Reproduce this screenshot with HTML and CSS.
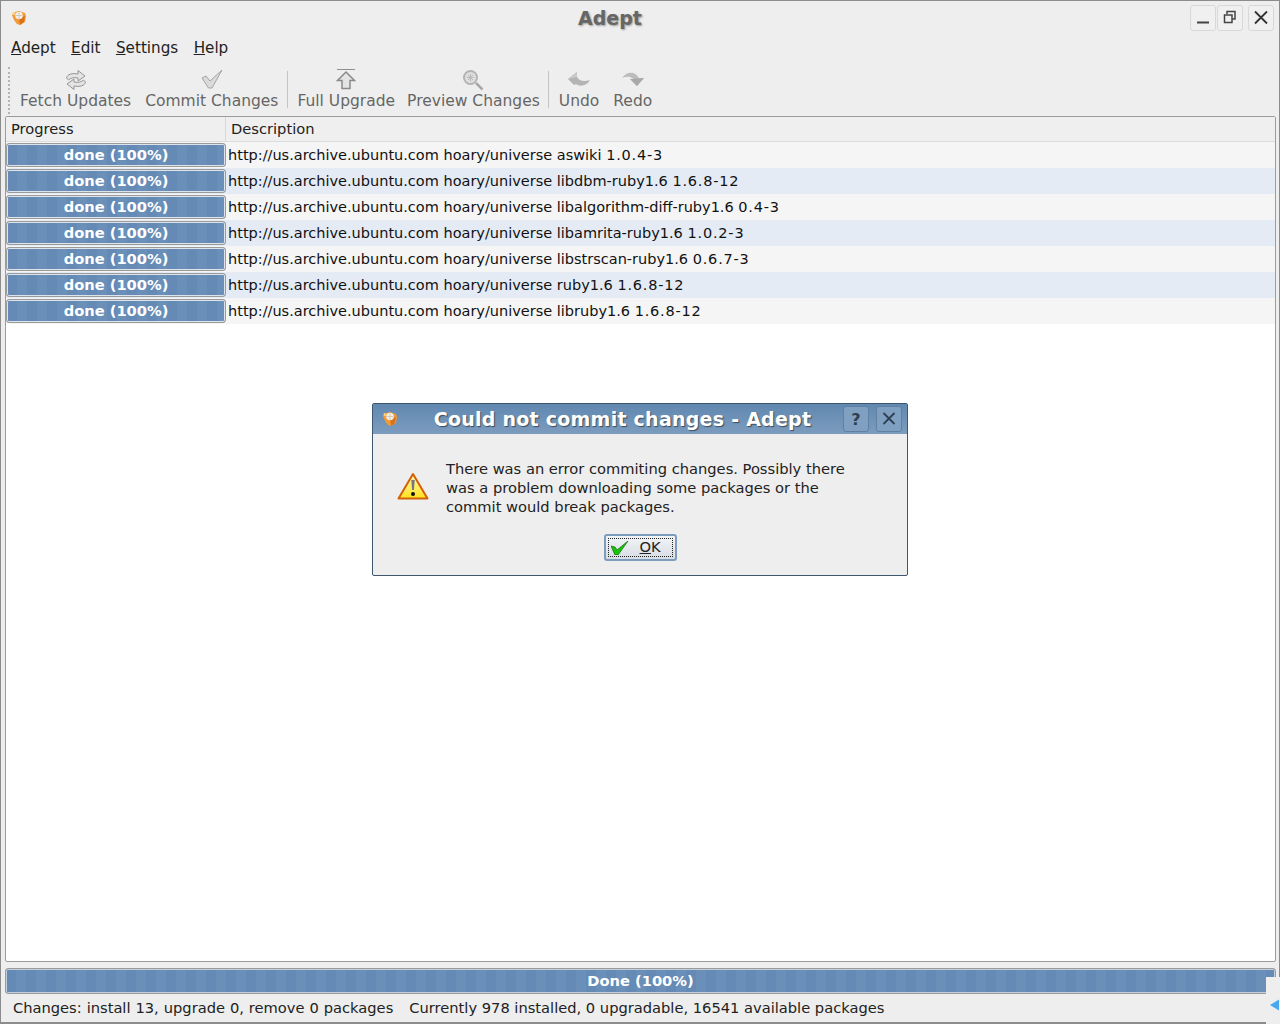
FILE: index.html
```html
<!DOCTYPE html>
<html lang="en">
<head>
<meta charset="utf-8">
<title>Adept</title>
<link rel="stylesheet" href="styles.css">
</head>
<body>
<div class="window">
  <header class="titlebar">
    <svg class="app-icon" viewBox="0 0 16 16" width="16" height="16"><path d="M1 5l3-3 4-1 6 2 1 3-1 6-5 3-3-1-3-4z" fill="#f39a33"/><path d="M8 8l6-2-1 6-4 3z" fill="#d9721a"/><circle cx="8" cy="5.500" r="3.800" fill="#f4efe8"/><path d="M8 2v7M4.500 5.500h7" stroke="#c9c0b4" stroke-width=".8"/><circle cx="3" cy="3.500" r="1.500" fill="#fbd27a"/></svg>
    <div class="title">Adept</div>
    <div class="wm-buttons">
      <button class="wm-btn"><svg viewBox="0 0 24 24" width="24" height="24"><path d="M6 16.500h12" stroke="#444" stroke-width="2" fill="none"/></svg></button>
      <button class="wm-btn"><svg viewBox="0 0 24 24" width="24" height="24"><path d="M9 8V5.500h8V13h-3M6.500 9h7.500v7.500h-7.500z" stroke="#444" stroke-width="1.500" fill="none"/></svg></button>
      <button class="wm-btn wm-close"><svg viewBox="0 0 24 24" width="24" height="24"><path d="M6 5.500l12 12M18 5.500l-12 12" stroke="#333" stroke-width="1.800" fill="none"/></svg></button>
    </div>
  </header>
  <nav class="menubar">
    <span class="menu"><u>A</u>dept</span>
    <span class="menu"><u>E</u>dit</span>
    <span class="menu"><u>S</u>ettings</span>
    <span class="menu"><u>H</u>elp</span>
  </nav>
  <div class="toolbar">
    <div class="handle"></div>
    <div class="tool tool-fetch">
      <svg viewBox="0 0 22 22" width="22" height="22"><path d="M1.500 9C2.500 5 7 4 13 5V1.500L20 7l-7 5V9C9 8 5.500 9 3.500 11z" fill="#e4e4e4" stroke="#959595"/><path d="M20.500 13c-1 4-5.500 5-11.500 4v3.500L2 15l7-5v3c4 1 7.500 0 9.500-2z" fill="#e4e4e4" stroke="#959595"/></svg>
      <span>Fetch Updates</span>
    </div>
    <div class="tool tool-commit">
      <svg viewBox="0 0 22 22" width="22" height="22"><path d="M1 9l4-2 4 5L21 1 11 19H7.500z" fill="#dadada" stroke="#a4a4a4"/></svg>
      <span>Commit Changes</span>
    </div>
    <div class="sep sep-1"></div>
    <div class="tool tool-upgrade">
      <svg viewBox="0 0 22 22" width="22" height="22"><path d="M2 .5h18" stroke="#8e8e8e" fill="none"/><path d="M11 3l8.500 8.500H15v8H7v-8H2.500z" fill="#e4e4e4" stroke="#8a8a8a" stroke-width="1.500"/></svg>
      <span>Full Upgrade</span>
    </div>
    <div class="tool tool-preview">
      <svg viewBox="0 0 22 22" width="22" height="22"><circle cx="8.500" cy="8.500" r="6.500" fill="#dedede" stroke="#b4b4b4" stroke-width="2"/><path d="M8.500 5v7M5 8.500h7M6 6l5 5M11 6l-5 5" stroke="#bcbcbc"/><path d="M14 14l6.500 6.500" stroke="#a8a8a8" stroke-width="2.500"/></svg>
      <span>Preview Changes</span>
    </div>
    <div class="sep sep-2"></div>
    <div class="tool tool-undo">
      <svg viewBox="0 0 22 22" width="22" height="22"><path d="M0 10l9-7v5c2 4 7 5 13 3-3 6-10 7-14 4l-2 1z" fill="#b4b4b4"/><path d="M0 10l9-7v5z" fill="#c9c9c9"/></svg>
      <span>Undo</span>
    </div>
    <div class="tool tool-redo">
      <svg viewBox="0 0 22 22" width="22" height="22"><path d="M0 9c5-7 13-7 17 0h5l-7 8-7-7 4 .500C9 7 5 7 0 9z" fill="#bcbcbc"/><path d="M22 9l-7 8-7-7z" fill="#a9a9a9"/></svg>
      <span>Redo</span>
    </div>
  </div>
  <main class="list">
    <div class="list-head">
      <div class="col-progress">Progress</div>
      <div class="col-desc">Description</div>
    </div>
    <div class="row"><div class="bar">done (100%)</div><div class="desc">http://us.archive.ubuntu.com hoary/universe aswiki <span class="ver">1.0.4-3</span></div></div>
    <div class="row alt"><div class="bar">done (100%)</div><div class="desc">http://us.archive.ubuntu.com hoary/universe libdbm-ruby1.6 <span class="ver">1.6.8-12</span></div></div>
    <div class="row"><div class="bar">done (100%)</div><div class="desc">http://us.archive.ubuntu.com hoary/universe libalgorithm-diff-ruby1.6 <span class="ver">0.4-3</span></div></div>
    <div class="row alt"><div class="bar">done (100%)</div><div class="desc">http://us.archive.ubuntu.com hoary/universe libamrita-ruby1.6 <span class="ver">1.0.2-3</span></div></div>
    <div class="row"><div class="bar">done (100%)</div><div class="desc">http://us.archive.ubuntu.com hoary/universe libstrscan-ruby1.6 <span class="ver">0.6.7-3</span></div></div>
    <div class="row alt"><div class="bar">done (100%)</div><div class="desc">http://us.archive.ubuntu.com hoary/universe ruby1.6 <span class="ver">1.6.8-12</span></div></div>
    <div class="row"><div class="bar">done (100%)</div><div class="desc">http://us.archive.ubuntu.com hoary/universe libruby1.6 <span class="ver">1.6.8-12</span></div></div>
  </main>
  <div class="total-bar">Done (100%)</div>
  <footer class="status">
    <span class="status-changes">Changes: install 13, upgrade 0, remove 0 packages</span>
    <span>Currently 978 installed, 0 upgradable, 16541 available packages</span>
  </footer>
</div>
<aside class="dialog">
  <header class="dlg-title">
    <svg class="dlg-icon" viewBox="0 0 16 16" width="16" height="16"><path d="M1 5l3-3 4-1 6 2 1 3-1 6-5 3-3-1-3-4z" fill="#f39a33"/><path d="M8 8l6-2-1 6-4 3z" fill="#d9721a"/><circle cx="8" cy="5.500" r="3.800" fill="#f4efe8"/><path d="M8 2v7M4.500 5.500h7" stroke="#c9c0b4" stroke-width=".8"/><circle cx="3" cy="3.500" r="1.500" fill="#fbd27a"/></svg>
    <div class="dlg-caption">Could not commit changes - Adept</div>
    <button class="dlg-btn">?</button>
    <button class="dlg-btn"><svg viewBox="0 0 24 24" width="24" height="24"><path d="M6.500 6l11 11M17.500 6l-11 11" stroke="#2f3f52" stroke-width="1.800" fill="none"/></svg></button>
  </header>
  <div class="dlg-body">
    <svg class="warn" viewBox="0 0 32 28" width="32" height="28"><defs><linearGradient id="warn-fill" x1="0" y1="0" x2="0" y2="1"><stop offset="0" stop-color="#fff8c0"/><stop offset="1" stop-color="#ffe21a"/></linearGradient></defs><path d="M16 2L30.500 26.500H1.500z" fill="url(#warn-fill)" stroke="#d4600a" stroke-width="2" stroke-linejoin="round"/><path d="M14.300 8h3.400l-.8 10h-1.800z" fill="#777"/><circle cx="16" cy="22" r="2" fill="#111"/></svg>
    <p class="dlg-text">There was an error commiting changes. Possibly there was a problem downloading some packages or the commit would break packages.</p>
  </div>
  <div class="dlg-actions">
    <button class="ok">
      <span class="ok-inner">
        <svg viewBox="0 0 18 14" width="18" height="14"><path d="M0 5l4 1 2 3L17 0 7 14H4z" fill="#17c60c" stroke="#0d6a07" stroke-width=".7"/></svg>
        <span class="ok-label"><u>O</u>K</span>
      </span>
    </button>
  </div>
</aside>
<div class="tray"><svg viewBox="0 0 10 12" width="10" height="12"><path d="M0 6l9-5.500v11z" fill="#4aa8ee"/></svg></div>
</body>
</html>
```
FILE: styles.css
```css
* { box-sizing: border-box; }
html, body { margin: 0; padding: 0; }
body {
  width: 1280px; height: 1024px; position: relative; overflow: hidden;
  background: #eeeeee; color: #111;
  font-family: "DejaVu Sans", sans-serif; font-size: 14.67px;
}
.window {
  width: 1280px; height: 1024px; display: flex; flex-direction: column;
  border: 1px solid #8c8c8c; border-width: 1px 1px 2px 1px; padding: 0 3px 0 3px;
}
.titlebar { height: 34px; display: flex; align-items: center; position: relative; flex: none; margin: 0 -3px; padding-left: 10px; }
.app-icon { flex: none; }
.title {
  position: absolute; left: 0; right: 60px; top: 6px; text-align: center;
  font-weight: bold; font-size: 19px; color: #666; text-shadow: 1px 1px 2px #9a9a9a;
}
.wm-buttons { position: absolute; right: 5px; top: 4px; display: flex; }
.wm-btn {
  width: 26px; height: 26px; padding: 0; margin-left: 1px; background: #f0f0f0;
  border: 1px solid #d8d8d8; border-radius: 3px; display: flex; align-items: center; justify-content: center;
}
.wm-close { margin-left: 5px; }
.menubar { height: 24px; display: flex; align-items: center; flex: none; padding: 2px 0 0 7px; gap: 15.400px; font-size: 15.200px; color: #222; }
.toolbar { height: 57px; display: flex; flex: none; padding-top: 10px; color: #666; font-size: 15.500px; }
.handle { width: 3px; height: 47px; margin: -2px 6px 0 4px; border-left: 2px dotted #b4b4b4; flex: none; }
.tool { display: flex; flex-direction: column; align-items: center; flex: none; line-height: 21px; }
.tool svg { display: block; height: 22px; }
.tool-fetch { margin-left: 3px; }
.tool-commit { margin-left: 14px; }
.sep { width: 1px; height: 37px; margin-top: 2px; background: #c4c4c4; flex: none; }
.sep-1 { margin-left: 9px; margin-right: 9px; }
.tool-preview { margin-left: 12px; }
.sep-2 { margin-left: 8px; margin-right: 10px; }
.tool-redo { margin-left: 14px; }
.list {
  flex: none; height: 846px; background: #fff;
  border: 1px solid #9c9c9c; border-radius: 2px; margin: 0 0 0 1px; width: 1271px;
}
.list-head { height: 25px; display: flex; background: #efefef; border-bottom: 1px solid #dcdcdc; line-height: 24px; color: #222; }
.col-progress { width: 220px; padding-left: 5px; border-right: 1px solid #d8d8d8; }
.col-desc { padding-left: 5px; }
.row { height: 26px; display: flex; align-items: center; background: #f5f5f5; }
.row.alt { background: #e5ebf5; }
.bar, .total-bar {
  background: repeating-linear-gradient(90deg, #648ab5 0 10px, #6a8fb8 10px 20px);
  color: #fff; font-weight: bold; text-align: center;
  border: 1px solid #9a9a9a; border-radius: 3px; box-shadow: inset 0 0 0 1px #dde4ec;
}
.bar { width: 220px; height: 24px; line-height: 22px; flex: none; }
.desc { margin: 0 0 0 2px; color: #111; white-space: nowrap; font-size: 14.500px; line-height: 24px; }
.ver { letter-spacing: .8px; }
.total-bar { flex: none; width: 1271px; height: 26px; margin: 6px 0 0 1px; line-height: 24px; box-shadow: inset 0 0 0 1px #c4d0de; }
.status { flex: none; height: 28px; display: flex; align-items: center; padding: 0 0 2px 9px; gap: 16px; color: #222; white-space: nowrap; }
.status-changes { word-spacing: .3px; }
.dialog {
  position: absolute; left: 372px; top: 403px; width: 536px; height: 173px;
  background: #eeeeee; border: 1px solid #3e566e; border-radius: 2px;
  display: flex; flex-direction: column;
}
.dlg-title {
  height: 30px; flex: none; display: flex; align-items: center; padding: 0 5px 0 9px;
  background: linear-gradient(#6188b0, #7c9cbe);
}
.dlg-icon { flex: none; }
.dlg-caption {
  flex: 1; text-align: center; color: #fff; font-weight: bold; font-size: 19px;
  text-shadow: 1px 1px 1px #3b4b5c; white-space: nowrap; padding-left: 11px; letter-spacing: .25px;
}
.dlg-btn {
  width: 26px; height: 26px; margin-left: 7px; padding: 0; background: #80a0c2; border: 1px solid #5f80a3; border-radius: 3px;
  font: bold 16px "DejaVu Sans", sans-serif; color: #2f3f52; display: flex; align-items: center; justify-content: center;
}
.dlg-body { display: flex; padding: 25px 0 0 24px; flex: none; }
.warn { flex: none; margin-top: 13px; }
.dlg-text { margin: 0 0 0 17px; width: 420px; line-height: 19px; color: #222; }
.dlg-actions { display: flex; justify-content: center; margin-top: 18px; }
.ok {
  width: 73px; height: 27px; padding: 2px; background: linear-gradient(#f2f4f7, #d8dde4);
  border: 2px solid #7d9dbf; border-radius: 3px; font: 14.670px "DejaVu Sans", sans-serif; color: #222;
}
.ok-inner { display: flex; align-items: center; height: 100%; border: 1px dotted #222; padding-left: 2px; }
.ok-label { margin: 0 0 2px 11px; }
.tray { position: absolute; left: 1266px; top: 977px; width: 14px; height: 47px; background: #eeeeee; padding: 20px 0 0 4px; }
```
